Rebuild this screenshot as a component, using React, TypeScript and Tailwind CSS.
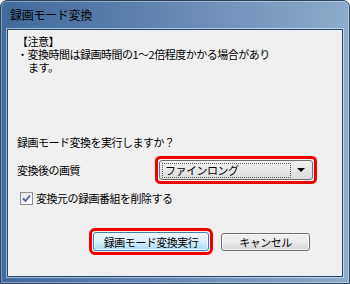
import React, { useState } from 'react';

const jp = "font-['MS_UI_Gothic','Noto_Sans_CJK_JP',sans-serif]";

const App: React.FC = () => {
  const [deleteSource, setDeleteSource] = useState(true);

  return (
    <div className={`w-[350px] h-[284px] bg-[#f0f0f0] ${jp}`}>
      {/* window frame */}
      <div className="w-[350px] h-[284px] rounded-t-[7px] border border-[#2b4460] bg-gradient-to-r from-[#3f6a9c] via-[#6588b4] to-[#8fabcb] flex flex-col p-[6px] pt-0 shadow-[inset_0_0_0_1px_rgba(255,255,255,0.35)]">
        {/* title bar */}
        <div className="h-[28px] flex items-center pl-[3px] text-[12px] text-black tracking-[-0.3px]">
          録画モード変換
        </div>

        {/* client area */}
        <div className="flex-1 border border-[#24466e] shadow-[0_0_0_1px_rgba(255,255,255,0.5)] bg-[#f0f0f0] flex flex-col px-[9px] pt-[5px] text-[11px] leading-[13px] tracking-[-0.5px] text-black whitespace-nowrap">
          <p>【注意】</p>
          <p>・変換時間は録画時間の1～2倍程度かかる場合があり</p>
          <p className="pl-[11px]">ます。</p>

          <p className="mt-[62px]">録画モード変換を実行しますか？</p>

          <div className="mt-[7px] flex items-center">
            <span className="w-[138px]">変換後の画質</span>
            <div className="rounded-[5px] border-[3px] border-[#ee0000] p-[1px]">
              <div className="w-[154px] h-[20px] rounded-[3px] border border-[#707070] bg-gradient-to-b from-[#f2f2f2] to-[#dcdcdc] flex items-center pl-[2px] pr-[4px]">
                <div className="flex-1 h-[15px] border border-dotted border-[#555] flex items-center pl-[2px] leading-[12px]">
                  ファインロング
                </div>
                <svg width="14" height="14" viewBox="0 0 14 14" className="ml-[3px]">
                  <path d="M3 5 L11 5 L7 9 Z" fill="#000" />
                </svg>
              </div>
            </div>
          </div>

          <label className="mt-[8px] flex items-center pl-[3px]">
            <span
              onClick={() => setDeleteSource(!deleteSource)}
              className="w-[13px] h-[13px] border border-[#8e8f8f] bg-gradient-to-br from-[#e8e8e8] to-[#ffffff] flex items-center justify-center"
            >
              {deleteSource && (
                <svg width="11" height="11" viewBox="0 0 11 11">
                  <path d="M2 5.5 L4.5 8 L9 2.5" stroke="#4a5f97" strokeWidth="1.8" fill="none" />
                </svg>
              )}
            </span>
            <span className="ml-[3px]">変換元の録画番組を削除する</span>
          </label>

          <div className="mt-[23px] flex items-center">
            <div className="ml-[72px] rounded-[6px] border-[3px] border-[#ee0000] p-[1px]">
              <button className="w-[116px] h-[19px] rounded-[3px] border border-[#3c7fb1] bg-gradient-to-b from-[#eaf6fd] via-[#d9f0fc] to-[#a7d9f5] leading-[12px] shadow-[inset_0_0_0_1px_rgba(255,255,255,0.7)]">
                録画モード変換実行
              </button>
            </div>
            <button className="ml-[8px] w-[89px] h-[18px] rounded-[3px] border border-[#707070] bg-gradient-to-b from-[#f2f2f2] via-[#ebebeb] to-[#d5d5d5] leading-[12px] shadow-[inset_0_0_0_1px_rgba(255,255,255,0.7)]">
              キャンセル
            </button>
          </div>
        </div>
      </div>
    </div>
  );
};

export default App;
